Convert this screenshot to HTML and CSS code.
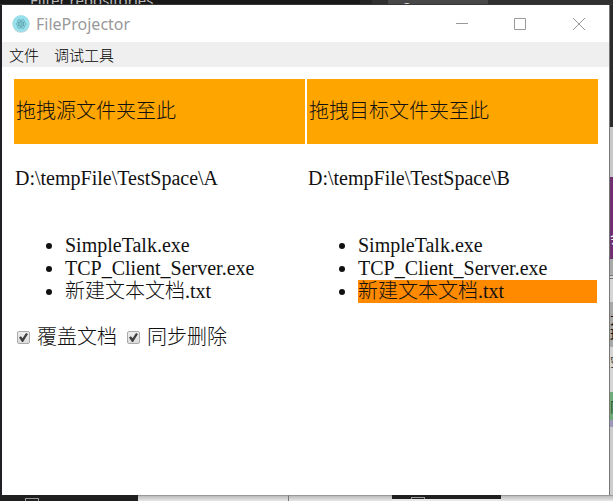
FILE: index.html
```html
<!DOCTYPE html>
<html lang="zh-CN">
<head>
<meta charset="utf-8">
<title>FileProjector</title>
<link rel="stylesheet" href="styles.css">
</head>
<body>
<div class="edge edge-top" aria-hidden="true"><span class="behind-title">Filter repositories</span><span class="behind-tab">C</span><span class="behind-rest"></span></div>
<div class="edge edge-left" aria-hidden="true"></div>
<main class="window">
  <header class="titlebar">
    <svg class="logo" viewBox="0 0 18 18" aria-hidden="true">
      <circle cx="9" cy="9" r="8.7" fill="#c5d5d8"/>
      <circle cx="9" cy="8.6" r="8.3" fill="#96e1eb"/>
      <g fill="none" stroke="#5fa3ae" stroke-width=".8">
        <ellipse cx="9" cy="9" rx="5" ry="2"/>
        <ellipse cx="9" cy="9" rx="5" ry="2" transform="rotate(60 9 9)"/>
        <ellipse cx="9" cy="9" rx="5" ry="2" transform="rotate(120 9 9)"/>
      </g>
      <circle cx="9" cy="9" r=".8" fill="#4f919c"/>
    </svg>
    <h1 class="title">FileProjector</h1>
    <div class="controls">
      <button class="control" type="button" aria-label="最小化"><svg viewBox="0 0 12 12"><path d="M0 5.5H12"/></svg></button>
      <button class="control" type="button" aria-label="最大化"><svg viewBox="0 0 12 12"><path d="M.5.5H11.5V11.5H.5Z"/></svg></button>
      <button class="control" type="button" aria-label="关闭"><svg viewBox="0 0 12 12"><path d="M0 0L12 12M12 0L0 12"/></svg></button>
    </div>
  </header>
  <nav class="menubar">
    <button class="menu" type="button">文件</button>
    <button class="menu" type="button">调试工具</button>
  </nav>
  <div class="content">
    <div class="folders">
      <section class="folder">
        <p class="drop">拖拽源文件夹至此</p>
        <p class="path">D:\tempFile\TestSpace\A</p>
        <ul class="files">
          <li>SimpleTalk.exe</li>
          <li>TCP_Client_Server.exe</li>
          <li>新建文本文档.txt</li>
        </ul>
      </section>
      <section class="folder">
        <p class="drop">拖拽目标文件夹至此</p>
        <p class="path">D:\tempFile\TestSpace\B</p>
        <ul class="files">
          <li>SimpleTalk.exe</li>
          <li>TCP_Client_Server.exe</li>
          <li class="changed">新建文本文档.txt</li>
        </ul>
      </section>
    </div>
    <div class="options">
      <label class="option"><input type="checkbox" checked>覆盖文档</label>
      <label class="option"><input type="checkbox" checked>同步删除</label>
    </div>
  </div>
</main>
<div class="edge edge-right" aria-hidden="true">
  <span class="band dark"></span>
  <span class="band pale"></span>
  <span class="band purple">会</span>
  <span class="band grey"></span>
  <span class="band light"></span>
  <span class="band silver">大理</span>
  <span class="band white">空</span>
  <span class="band green">限</span>
  <span class="band lilac"></span>
  <span class="band rest"></span>
</div>
<div class="edge edge-bottom" aria-hidden="true">
  <span class="base base-dark"><i class="stub"></i></span>
  <span class="base base-pale"></span>
  <span class="base base-pale base-divided"></span>
  <span class="base base-dark base-short"><i class="stub"></i></span>
  <span class="base base-pale"></span>
</div>
</body>
</html>
```

FILE: styles.css
```css
* {
  box-sizing: border-box;
}

body {
  margin: 0;
  height: 100vh;
  overflow: hidden;
  display: grid;
  grid-template: 5px minmax(0, 1fr) 6px / 2px minmax(0, 1fr) 4px;
  background: #242424;
  color: #111;
  font: 300 20px/23px "Liberation Serif", "Noto Sans CJK SC", serif;
}

/* Desktop showing round the window */
.edge {
  display: grid;
  overflow: hidden;
}

.edge-top {
  grid-column: 1 / -1;
  grid-template-columns: 360fr 128fr 125fr;
  background: #181818;
  border-bottom: 1px solid #363636;
}

.behind-title {
  padding-left: 30px;
  margin-top: -8px;
  color: #b8b8b8;
  font: 15px/16px "Noto Sans", sans-serif;
}

.behind-tab {
  padding-left: 41px;
  background: linear-gradient(90deg, #242424 12px, #303030 12px, #303030 28px, #484848 28px);
  color: #ddd;
  font: 14px/16px "Noto Sans", sans-serif;
}

.behind-rest {
  background: #303030;
}

.edge-left {
  background: #202024;
}

.edge-right {
  grid-template-rows:
    minmax(0, 122fr) minmax(0, 50fr) minmax(0, 82fr) minmax(0, 16fr) minmax(0, 27fr)
    minmax(0, 45fr) minmax(0, 45fr) minmax(0, 28fr) minmax(0, 7fr) minmax(0, 68fr);
  border-left: 1px solid #777;
}

.band {
  overflow: hidden;
  font: 14px/16px "Noto Sans CJK SC", sans-serif;
}

.dark {
  background: #292b2d;
}

.pale {
  background: #c8c8c8;
}

.purple {
  padding-top: 52px;
  background: #70306f;
  color: #fff;
}

.grey {
  background: #aaa;
}

.light {
  background: #d5d5d5;
  border-top: 4px double #777;
}

.silver {
  padding-top: 8px;
  background: #a8a8a8;
}

.white {
  padding-top: 6px;
  background: #d5d5d5;
  color: #444;
}

.green {
  padding-top: 6px;
  background: #6eab78;
  color: #244d2d;
}

.lilac {
  background: #9c98bd;
}

.rest {
  background: #ccc;
}

.edge-bottom {
  grid-column: 1 / -1;
  grid-template-columns: 138fr 150fr 104fr 109fr 112fr;
}

.base {
  display: flex;
}

.base-dark {
  padding: 3px 0 0 25px;
  background: #202020;
}

.base-pale {
  border-top: 1px solid #999;
  background: linear-gradient(#bbb, #e8e8e8);
}

.base-divided {
  border-left: 1px solid #777;
}

.base-short {
  padding: 2px 0 0 19px;
  border-bottom: 2px solid #e8e8e8;
}

.stub {
  width: 14px;
  border: 1px solid #999;
  border-bottom: 0;
}

/* Window */
.window {
  display: flex;
  flex-direction: column;
  background: #fff;
}

.titlebar {
  display: flex;
  align-items: center;
  height: 37px;
  padding-left: 10px;
}

.logo {
  width: 18px;
  height: 18px;
}

.title {
  margin: 0 0 0 6px;
  color: #999;
  font: 16px/20px "Noto Sans", sans-serif;
}

.controls {
  display: flex;
  align-self: stretch;
  margin-left: auto;
}

.control {
  display: grid;
  place-items: center;
  width: 58px;
  padding: 0;
  border: 0;
  background: none;
}

.control:last-child {
  width: 60px;
}

.control svg {
  width: 12px;
  height: 12px;
  fill: none;
  stroke: #999;
}

.menubar {
  display: flex;
  gap: 15px;
  height: 25px;
  padding: 0 7px;
  background: #efefef;
}

.menu {
  padding: 0;
  border: 0;
  background: none;
  color: #000;
  font: 300 15px/25px "Noto Sans CJK SC", sans-serif;
}

.content {
  padding: 10px;
}

.folders {
  display: grid;
  grid-template-columns: repeat(2, minmax(0, 1fr));
  gap: 2px;
  padding: 2px 1px 0 2px;
}

.drop {
  margin: 0;
  padding: 21px 2px;
  background: #ffa500;
}

.path {
  margin: 0;
  padding: 23px 1px;
}

.files {
  margin: 0;
  padding: 21px 1px 23px 51px;
}

.changed {
  background: #ff8a00;
}

.options {
  display: flex;
  gap: 10px;
  padding-left: 5px;
}

.option {
  display: flex;
  align-items: center;
  gap: 7px;
}

.option input {
  appearance: none;
  display: grid;
  width: 13px;
  height: 13px;
  margin: 0;
  border: 1px solid #aaa;
  border-radius: 2px;
  background: linear-gradient(#eee, #dcdcdc);
}

.option input:checked::before {
  content: "";
  margin: 1px;
  background: #404040;
  clip-path: polygon(0 50%, 20% 35%, 40% 58%, 78% 0, 100% 12%, 45% 100%, 34% 100%);
}
```
